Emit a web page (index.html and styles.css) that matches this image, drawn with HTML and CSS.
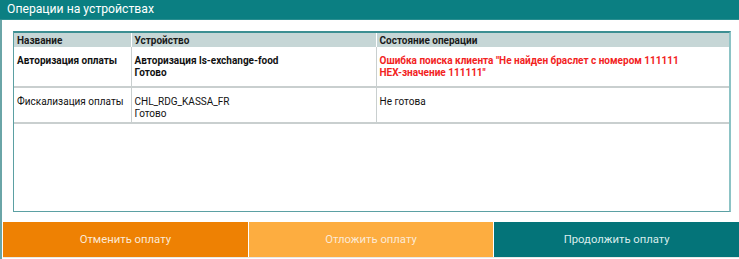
FILE: index.html
```html
<!DOCTYPE html>
<html lang="ru">
<head>
<meta charset="utf-8">
<link rel="stylesheet" href="styles.css">
</head>
<body>
<div class="window">
  <div class="title">Операции на устройствах</div>
  <div class="content">
    <div class="tablebox">
      <table class="ops">
        <colgroup><col class="c1"><col class="c2"><col class="c3"></colgroup>
        <thead>
          <tr><th>Название</th><th>Устройство</th><th>Состояние операции</th></tr>
        </thead>
        <tbody>
          <tr class="r1 bold">
            <td>Авторизация оплаты</td>
            <td>Авторизация ls-exchange-food<br>Готово</td>
            <td class="err">Ошибка поиска клиента "Не найден браслет с номером 111111<br>HEX-значение 111111"</td>
          </tr>
          <tr class="r2">
            <td>Фискализация оплаты</td>
            <td>CHL_RDG_KASSA_FR<br>Готово</td>
            <td>Не готова</td>
          </tr>
        </tbody>
      </table>
    </div>
    <div class="buttons">
      <button class="btn cancel">Отменить оплату</button>
      <button class="btn defer">Отложить оплату</button>
      <button class="btn go">Продолжить оплату</button>
    </div>
  </div>
</div>
</body>
</html>
```
FILE: styles.css
```css
* { box-sizing: border-box; }
html, body { margin: 0; padding: 0; background: #fff; }
body { font-family: Roboto, "Noto Sans", sans-serif; width: 739px; height: 259px; overflow: hidden; }
.window { display: flex; flex-direction: column; height: 259px; }
.title {
  height: 20px; background: #0b7f82; color: #fff;
  font-size: 12.2px; line-height: 19px; padding-left: 7px;
  border-bottom: 1px solid #2a8e90;
}
.content {
  flex: 1; display: flex; flex-direction: column;
  border-left: 2px solid #6aa5a7;
  padding: 11px 0 0 11px;
}
.tablebox {
  width: 718px; height: 181px;
  border: 1px solid #5ba0a3; border-top: 2px solid #3d8f92; border-right: 2px solid #8cc3c5;
  background: #fff;
}
.ops { border-collapse: collapse; width: 100%; font-size: 10px; color: #111; }
.ops col.c1 { width: 117px; }
.ops col.c2 { width: 245px; }
.ops th {
  background: #c6d6d6; text-align: left; font-weight: bold; color: #1a1a1a;
  height: 14px; padding: 1px 3px 0; line-height: 13px;
  border-left: 1px solid #fff;
}
.ops th:first-child { border-left: none; }
.ops td {
  vertical-align: top; padding: 8px 3px 0 3px; line-height: 11.5px;
  border-left: 1px solid #c9cfcf; border-bottom: 2px solid #c9cfcf;
}
.ops td:first-child { border-left: none; }
.ops tr.r1 td { height: 40px; }
.ops tr.r2 td { height: 36px; }
.bold td { font-weight: bold; }
.ops td.err { color: #f2231e; }
.buttons { display: flex; gap: 1px; margin: 10px 0 0 -10px; height: 36px; border-bottom: 1px solid #e8e8e8; }
.btn {
  flex: 1; border: none; font-family: inherit; font-size: 11.3px; color: #fbe9d6;
  cursor: pointer; padding: 0;
}
.cancel { background: #ee8103; }
.defer { background: #fdad40; }
.go { background: #047479; color: #d9ecec; }
```
